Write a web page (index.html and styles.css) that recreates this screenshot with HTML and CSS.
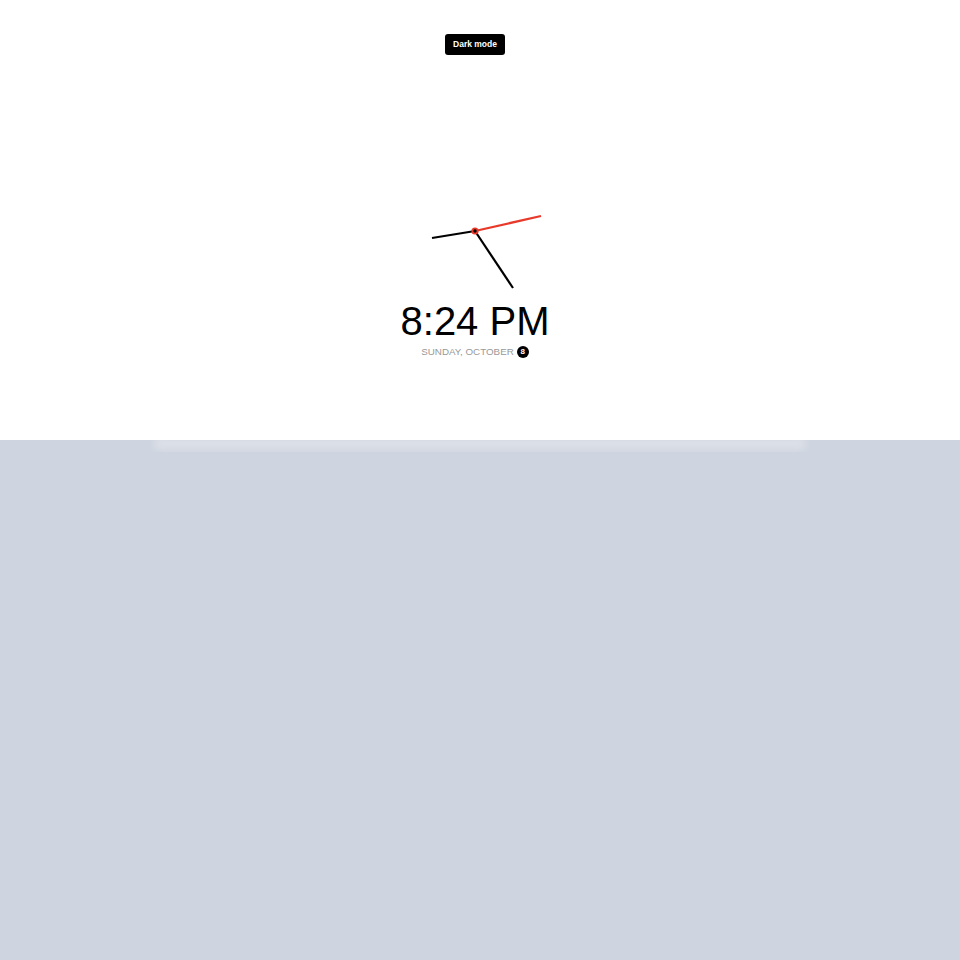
FILE: index.html
```html
<!DOCTYPE html>
<html lang="en">
<head>
<meta charset="utf-8">
<title>Clock</title>
<link rel="stylesheet" href="styles.css">
</head>
<body>
<section class="hero">
  <button class="toggle">Dark mode</button>
  <svg class="clock" width="140" height="140" viewBox="0 0 140 140">
    <line x1="70" y1="70" x2="27" y2="77" stroke="#000" stroke-width="2.2"/>
    <line x1="70" y1="70" x2="108" y2="127" stroke="#000" stroke-width="2.2"/>
    <line x1="70" y1="70" x2="136" y2="55" stroke="#e8392b" stroke-width="2.2"/>
    <circle cx="70" cy="70" r="3.6" fill="#e8392b"/>
    <circle cx="70" cy="70" r="1.7" fill="#000"/>
  </svg>
  <div class="time">8:24 PM</div>
  <div class="date">Sunday, October <span class="circle">8</span></div>
</section>
<div class="glow"></div>
</body>
</html>
```
FILE: styles.css
```css
html {
  background: #cfd5e0;
}
body {
  margin: 0;
  font-family: "Liberation Sans", Arial, sans-serif;
}
.hero {
  position: relative;
  z-index: 1;
  background: #fff;
  height: 440px;
  box-sizing: border-box;
  padding: 34px 10px 0 0;
  display: flex;
  flex-direction: column;
  align-items: center;
}
.toggle {
  background: #000;
  color: #fff;
  border: 0;
  border-radius: 3px;
  font-family: "Liberation Sans", Arial, sans-serif;
  font-weight: 700;
  font-size: 8.5px;
  height: 21px;
  padding: 0 8px;
  line-height: 21px;
}
.clock {
  display: block;
  margin-top: 106px;
}
.time {
  font-size: 40px;
  line-height: 1;
  color: #000;
}
.date {
  margin-top: 5px;
  font-size: 9.8px;
  line-height: 12px;
  color: #999;
  text-transform: uppercase;
  display: flex;
  align-items: center;
  gap: 3px;
}
.circle {
  display: inline-flex;
  align-items: center;
  justify-content: center;
  width: 12px;
  height: 12px;
  border-radius: 50%;
  background: #000;
  color: #fff;
  font-weight: 700;
  font-size: 8px;
}
.glow {
  width: 650px;
  height: 12px;
  margin: 0 auto;
  background: linear-gradient(to bottom, rgba(255, 255, 255, 0.55), rgba(255, 255, 255, 0));
  filter: blur(4px);
}
```
